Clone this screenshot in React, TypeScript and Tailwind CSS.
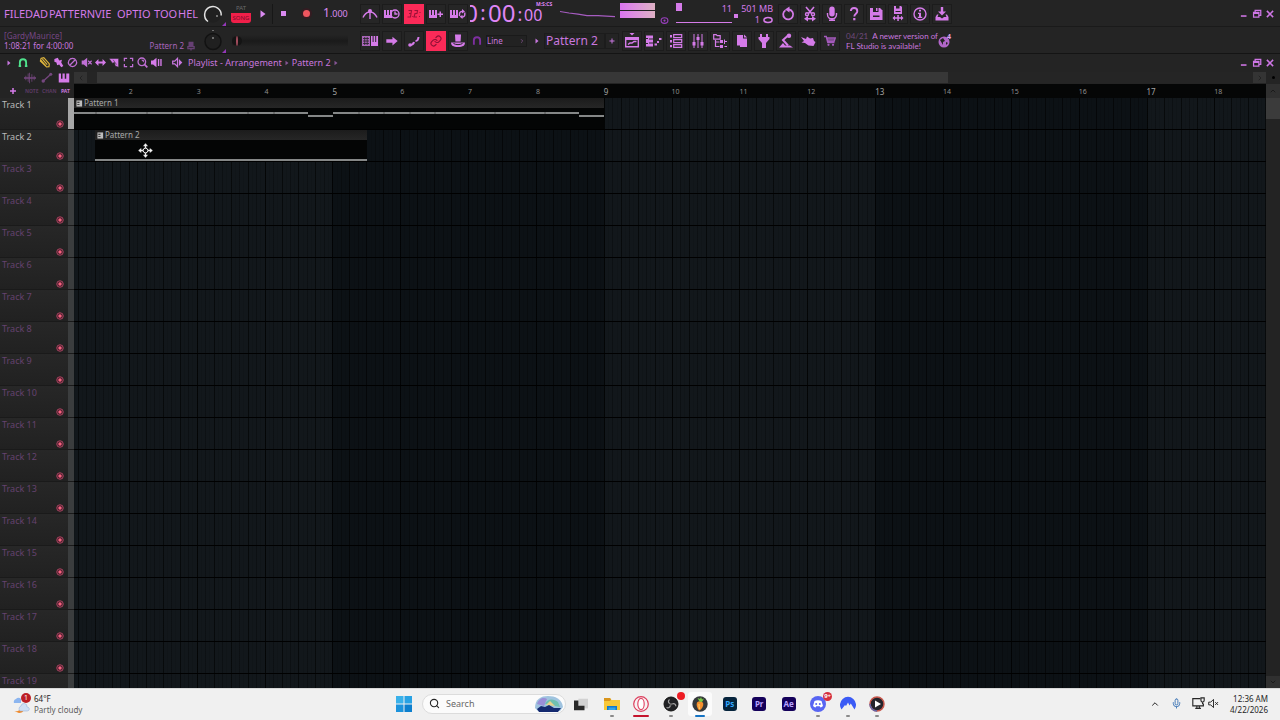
import React from "react";
import { Mic, Link as LinkIcon, Search, ChevronUp, ChevronDown, ChevronRight, ChevronLeft } from "lucide-react";

const BAR = 67.85;
const ORIGIN = -13;
const TRACKS = 19;
const BAR_NUMBERS = Array.from({ length: 18 }, (_, i) => i + 1);

function Glyph({ children, className = "size-4" }: { children: React.ReactNode; className?: string }) {
  return (
    <svg viewBox="0 0 16 16" className={`shrink-0 ${className}`} fill="currentColor" stroke="none" aria-hidden="true">
      {children}
    </svg>
  );
}

const line = { fill: "none", stroke: "currentColor", strokeWidth: 1.4 } as const;

const icons: Record<string, React.ReactNode> = {
  metronome: <Glyph><path d="M1 11.500C2.500 8 4.500 6.500 7 6M15 11.500C13.500 8 11.500 6.500 9 6M8 6v7" {...line} /><circle cx="8" cy="5" r="2" /></Glyph>,
  waitInput: <Glyph><path d="M0 4h2v5h1V4h2v5h1V4h2v8H0z" /><circle cx="11" cy="8" r="4" {...line} /><path d="M11 5.500V8h2.500" {...line} /></Glyph>,
  countdown: <Glyph className="size-4 text-[#9a1238]"><path d="M2.500 4.500h3l-.5 3H3m2 0-.5 3.500h-3M8.500 4.500h3l-.5 3H9L8 11h3" {...line} strokeWidth="1.1" /><path d="M6.300 10h1v1h-1zM13.500 6h1v1h-1zM13 10h1v1h-1z" /></Glyph>,
  overdub: <Glyph><path d="M1 4h2v5h1V4h2v5h1V4h2v8H1zM11.500 5.500h1.500v2h2V9h-2v2h-1.500V9h-2V7.500h2z" /></Glyph>,
  loopRec: <Glyph><path d="M0 4h2v5h1V4h2v5h1V4h2v8H0z" /><path d="M9.500 10V8a2.500 2.500 0 0 1 3-2.500M14.800 6.500V8.500a2.500 2.500 0 0 1-3 2.500" {...line} /><path d="m12 3 3 2.500-3 2zM12.500 13l-3-2.500 3-1.500z" /></Glyph>,
  typing: <Glyph><path d="M0 3h8v10H0z" opacity=".75" /><path d="M1 5.500h6M1 8h6M1 10.500h6M2.700 4v8M5.200 4v8" stroke="#242424" strokeWidth=".8" /><path d="M9 3h1.600v6h1V3h1.600v6h1V3H16v10H9z" /></Glyph>,
  arrow: <Glyph className="size-3.5"><path d="M1.500 6h7V3l6 5-6 5v-3h-7z" /></Glyph>,
  slide: <Glyph><path d="M4 12c3 0 3.500-1 4-3" {...line} strokeWidth="2" /><path d="M9.500 8c2 0 2.800-1.500 3-4" {...line} strokeWidth="2" /><circle cx="4" cy="12" r="1.800" /></Glyph>,
  stamp: <Glyph><path d="M5 1.500h6l-.4 7h-5.200z" /><path d="M1 9.500h14c0 3-2 4.500-7 4.500s-7-1.500-7-4.500z" /><path d="M3.500 10.500c2.500 1.500 6.500 1.500 9 0" stroke="#242424" fill="none" /></Glyph>,
  playlist: <Glyph><path d="M5.500 0h5L8 2.500z" /><path d="M1.700 4.700h12.600v9H1.700zM2 6.200h12" {...line} /><path d="M4 11.500l2-1.500h2l2-1.500h2.500" {...line} /></Glyph>,
  pianoRoll: <Glyph><path d="M0 2.500h7v3H3v1h4v3H3v1h4v3H0V11h2v-1H0V6h2V5H0z" /><path d="M8.500 10.500h2.500v2H8.500zM11 8h2v2h-2zM13 5h2.500v2H13z" /></Glyph>,
  rack: <Glyph><path d="M5.700 1.700h8v3h-8zM5.700 6.700h8v3h-8zM5.700 11.700h8v2.600h-8z" {...line} strokeWidth="1.200" /><path d="M2 2h2v2.500H2zM2 7h2v2.500H2zM2 12h2v2.300H2z" /></Glyph>,
  mixer: <Glyph><path d="M4 1v14M8 1v14M12 1v14" stroke="currentColor" strokeWidth="1" /><path d="M2.500 9h3v3.500h-3zM6.500 4h3v3h-3zM10.500 9h3v3.500h-3z" /></Glyph>,
  browser: <Glyph><path d="M1.700 1.700h2.500l1 1h3v3.500H1.700zM3.500 7v6.500h4M3.500 9h4" {...line} strokeWidth="1.200" /><path d="M8 7h3v3H8zM8 12h3v3H8zM12.500 8H15v1h-2.500zM12.500 13H15v1h-2.500zM12 6.500h1V11h-1z" /></Glyph>,
  project: <Glyph><path d="M3 2h6v3.500h4V14H6v-1.500H3z" /><path d="m10 1.500 3.200 3H10z" /></Glyph>,
  plug: <Glyph><path d="M4 1h2v3h4V1h2v3h1.500v2L10 10v5H6v-5L2.500 6V4H4z" /></Glyph>,
  touch: <Glyph><path d="M9.500 3 5 7l5 5.500" {...line} strokeWidth="2" /><circle cx="11" cy="2.800" r="2.200" /><path d="M1 14.500 5 10l2 2.500h5l3 2z" /></Glyph>,
  hand: <Glyph><path d="M1 4l5 2 1-2.500 3 2 3-.5 1 3 1.500 1-2 4-5-.5L5 10 1.500 9.500 4 8z" /></Glyph>,
  cart: <Glyph className="size-3 text-[#a45abb]"><path d="M0 2h3l2 8h9M4 4h11l-1.500 4.500H5z" {...line} strokeWidth="1.800" /><path d="M4.500 4.500h10L13 9H5.500z" opacity=".7" /><circle cx="6" cy="13" r="1.500" /><circle cx="12" cy="13" r="1.500" /></Glyph>,
  undo: <Glyph><path d="M5.500 4.200A5 5 0 1 0 9 3.500" {...line} strokeWidth="1.800" /><path d="m9.500.5-4.500 3 4.500 3z" /></Glyph>,
  cut: <Glyph><path d="m4 1 5.500 6.500M12 1 6.500 7.500" {...line} strokeWidth="1.600" /><circle cx="5" cy="8.200" r="1.500" {...line} /><circle cx="11" cy="8.200" r="1.500" {...line} /><path d="m6 10-4 2.700L6 15.500v-2h4v2l4-2.800L10 10v2H6z" /></Glyph>,
  microphone: <Glyph><rect x="5.300" y="0.500" width="5.400" height="10" rx="2.700" /><path d="M3.500 7v1.500a4.500 4.500 0 0 0 9 0V7" {...line} /><path d="M7.200 12h1.600v1.500H11V15H5v-1.500h2.200z" /></Glyph>,
  help: <Glyph><path d="M4.800 5C5 3 6 2 8 2s3.300 1.200 3.300 3.200C11.300 7.800 8.300 7.600 8.300 10.500" {...line} strokeWidth="1.900" /><path d="M7.200 12h2.200v2.300H7.200z" /></Glyph>,
  save: <Glyph><path d="M2 2h10l2.500 2.500V14H2z" /><path d="M5 2h5.500v4H5z" fill="#242424" /><path d="M5 9.500h6.500V11H5z" fill="#242424" /><path d="M8 2h1.500v3H8z" /></Glyph>,
  saveNew: <Glyph><path d="M4 0h7l1 1v7H4z" /><path d="M6 0h3.500v2.500H6zM5.500 5h5v1h-5z" fill="#242424" /><path d="M7.300 9h1.500v2.200H11v-1.700l2.500 2.500L11 14.500v-1.700H8.800V15H7.300v-2.200H5v1.700L2.500 12 5 9.500v1.700h2.300z" /></Glyph>,
  about: <Glyph><circle cx="8" cy="8" r="6" {...line} /><path d="M7 3.800h2v1.800H7zM6 6.800h3v4h1.200V12H5.800v-1.200H7V8H6z" /></Glyph>,
  render: <Glyph><path d="M6.800 1h2.400v4.500H12L8 9.500l-4-4h2.800z" /><path d="M3 8.500 1.500 11v3.500h13V11L13 8.500h-1.500L12.500 11H10l-2 1.500L6 11H3.500l1-2.500z" /></Glyph>,
};

function ToolButton({ label, active = false, children }: { label: string; active?: boolean; children: React.ReactNode }) {
  return (
    <button
      type="button"
      aria-label={label}
      className={
        active
          ? "flex size-5 items-center justify-center bg-[#fb2a58] text-[#8c1035]"
          : "flex size-5 items-center justify-center border border-[#1c1c1c] bg-[#262626] text-[#d57be9]"
      }
    >
      {children}
    </button>
  );
}

function Knob({ bright = false, label }: { bright?: boolean; label: string }) {
  return (
    <div role="img" aria-label={label} className="flex w-7 shrink-0 items-center justify-center">
      <svg viewBox="0 0 28 26" className="h-[26px] w-7" fill="none">
        <circle cx="13" cy="13.500" r="8" fill="#202020" stroke={bright ? "none" : "#121212"} strokeWidth="1.500" />
        {bright && <path d="M8 20.500a8.300 8.300 0 1 1 13.200-6" stroke="#e2e2e2" strokeWidth="1.500" />}
        {bright ? <circle cx="17" cy="15" r=".8" fill="#ddd" /> : <path d="M12.500 2h1v1h-1zM12.500 9h1v2h-1z" fill="#bbb" />}
        <path d="M22 25h4v-4z" fill="#9438b8" />
      </svg>
    </div>
  );
}

function WindowControls({ app }: { app: string }) {
  return (
    <div className="ml-auto flex items-center gap-[3px] pr-[5px] text-[#cf76e6]">
      <button type="button" aria-label={`Minimize ${app}`} className="flex h-3 w-2.5 items-center justify-center">
        <Glyph className="size-2.5"><path d="M3 10h9v2.500H3z" /></Glyph>
      </button>
      <button type="button" aria-label={`Restore ${app}`} className="flex h-3 w-2.5 items-center justify-center">
        <Glyph className="size-2.5"><path d="M5 5V2h9v8h-3M2.500 5.500h8.500v7.500H2.500zM2 7h9" {...line} strokeWidth="2" /></Glyph>
      </button>
      <button type="button" aria-label={`Close ${app}`} className="flex h-3 w-2.5 items-center justify-center">
        <Glyph className="size-2.5"><path d="m3 3 10 10M13 3 3 13" {...line} strokeWidth="2.500" /></Glyph>
      </button>
    </div>
  );
}

const menu = [
  ["FIL", "w-[15px]"],
  ["ED", "w-[14px]"],
  ["AD", "w-4"],
  ["PATTERN", "w-[46px]"],
  ["VIE", "w-[22px]"],
  ["OPTIO", "w-[37px]"],
  ["TOO", "w-6"],
  ["HEL", "w-5"],
];

function MainBar() {
  return (
    <div className="flex h-[27px] items-center overflow-hidden border-b border-[#1a1a1a] pt-px">
      <nav aria-label="Main menu" className="flex w-[200px] shrink-0 pl-1">
        {menu.map(([text, width]) => (
          <button key={text} type="button" className={`${width} shrink-0 text-left text-[11px] leading-4 whitespace-nowrap text-[#d57be9]`}>
            {text}
          </button>
        ))}
      </nav>
      <Knob bright label="Main volume" />
      <div className="flex w-[26px] shrink-0 flex-col items-center">
        <span className="text-[6px] leading-[9px] text-[#6b6b6b]">PAT</span>
        <button type="button" className="h-[10px] w-5 rounded-b-[3px] bg-[#f01f49] text-[6px] leading-[10px] text-[#7d0b2a]">SONG</button>
      </div>
      <button type="button" aria-label="Play" className="flex h-5 w-[19px] items-center justify-center border-r border-[#171717] text-[#d98af0]">
        <Glyph className="size-2.5"><path d="M4 2l8 6-8 6z" /></Glyph>
      </button>
      <button type="button" aria-label="Stop" className="flex h-5 w-5 items-center justify-center text-[#d98af0]">
        <span className="size-[5px] bg-current" />
      </button>
      <button type="button" aria-label="Record" className="flex h-5 w-[26px] items-center justify-center">
        <span className="size-[7px] rounded-full bg-[#f0565f] ring-2 ring-[#351c22]" />
      </button>
      <div className="flex w-[41px] shrink-0 items-baseline pl-1 text-[#d98af0]">
        <span className="text-[12px] leading-4">1</span>
        <span className="text-[9px] leading-4">.000</span>
      </div>
      <div className="flex shrink-0 gap-0.5">
        <ToolButton label="Metronome">{icons.metronome}</ToolButton>
        <ToolButton label="Wait for input">{icons.waitInput}</ToolButton>
        <ToolButton label="Countdown before recording" active>{icons.countdown}</ToolButton>
        <ToolButton label="Overdub">{icons.overdub}</ToolButton>
        <ToolButton label="Loop recording">{icons.loopRec}</ToolButton>
      </div>
      <div className="flex w-[87px] shrink-0 pl-0.5 text-[#df86f5]">
        <span className="flex w-2 justify-end overflow-hidden text-[24px] leading-[26px]">0</span>
        <span className="w-[10px] text-center text-[20px] leading-[26px]">:</span>
        <span className="w-7 text-[24px] leading-[26px]">00</span>
        <span className="w-2 text-center text-[18px] leading-[28px]">:</span>
        <span className="flex flex-col text-[16px]">
          <span className="pl-3 text-[5px] leading-[8px] font-bold">M:S:CS</span>
          <span className="leading-[14px]">00</span>
        </span>
      </div>
      <svg viewBox="0 0 64 26" className="h-[26px] w-16 shrink-0" fill="none" stroke="#a65cc0" strokeWidth="1.200" aria-hidden="true">
        <path d="M5 10.500 14 12l9 1.200 9 1.500h11l17 1" />
      </svg>
      <div className="flex h-full w-[37px] shrink-0 flex-col items-center gap-px pt-0.5">
        <span className="h-[7px] w-[35px] bg-linear-to-r from-[#db74f0] to-[#dfb1c4]" />
        <span className="h-[7px] w-[35px] bg-linear-to-r from-[#db74f0] to-[#dfb1c4]" />
      </div>
      <div className="flex h-full w-[122px] shrink-0 text-[9px] leading-[11px] text-[#d57be9]">
        <Glyph className="mt-[15px] ml-1 size-[9px] text-[#9a3fc0]"><ellipse cx="8" cy="8" rx="6" ry="5" {...line} strokeWidth="2" /><circle cx="8" cy="8" r="2" /></Glyph>
        <div className="ml-[7px] flex h-[22px] w-14 justify-between border-b border-current pt-0.5">
          <span className="h-2 w-1.5 bg-current" />
          <span>11</span>
        </div>
        <span className="mt-[13px] ml-0.5 size-1 bg-current" />
        <div className="ml-auto flex flex-col items-end pt-0.5 pr-[5px] whitespace-nowrap">
          <span>501 MB</span>
          <span className="flex items-center gap-[3px]">
            1<Glyph className="size-[10px]"><ellipse cx="8" cy="8" rx="6.500" ry="4" {...line} strokeWidth="2.500" /></Glyph>
          </span>
        </div>
      </div>
      <div className="flex shrink-0 gap-0.5">
        <ToolButton label="Undo">{icons.undo}</ToolButton>
        <ToolButton label="Cut">{icons.cut}</ToolButton>
        <ToolButton label="Audio recording">{icons.microphone}</ToolButton>
        <ToolButton label="Help">{icons.help}</ToolButton>
        <ToolButton label="Save">{icons.save}</ToolButton>
        <ToolButton label="Save new version">{icons.saveNew}</ToolButton>
        <ToolButton label="About">{icons.about}</ToolButton>
        <ToolButton label="Export">{icons.render}</ToolButton>
      </div>
      <WindowControls app="FL Studio" />
    </div>
  );
}

function PatternBar() {
  return (
    <div className="flex h-[27px] items-center overflow-hidden border-b border-[#141414] pt-px text-[#c877df]">
      <div className="flex w-[200px] shrink-0 items-end justify-between pr-1 pl-1 text-[8px] leading-[10px]">
        <div>
          <p className="text-[#754683]">[GardyMaurice]</p>
          <p>1:08:21 for 4:00:00</p>
        </div>
        <p className="flex items-center gap-0.5 text-[#a864bb]">
          Pattern 2
          <Glyph className="size-2.5 text-[#674074]"><path d="M4 1h8v9H4zM2 8h2v3h8V8h2v5H9v2H7v-2H2z" /></Glyph>
        </p>
      </div>
      <Knob label="Main pitch" />
      <div className="flex w-[132px] shrink-0 items-center pl-1">
        <input
          type="range"
          aria-label="Song position"
          defaultValue={0}
          className="h-3 w-[116px] appearance-none bg-linear-to-b from-transparent via-[#1a1a1a] to-transparent [&::-webkit-slider-thumb]:h-2.5 [&::-webkit-slider-thumb]:w-2.5 [&::-webkit-slider-thumb]:appearance-none [&::-webkit-slider-thumb]:rounded-full [&::-webkit-slider-thumb]:border-x-4 [&::-webkit-slider-thumb]:border-[#141414] [&::-webkit-slider-thumb]:bg-[#a04c5c]"
        />
      </div>
      <div className="flex shrink-0 gap-0.5">
        <ToolButton label="Typing keyboard to piano">{icons.typing}</ToolButton>
        <ToolButton label="Step editing">{icons.arrow}</ToolButton>
        <ToolButton label="Scroll to play position">{icons.slide}</ToolButton>
        <ToolButton label="Link controllers" active><LinkIcon size={12} strokeWidth={2.2} /></ToolButton>
        <ToolButton label="Multilink">{icons.stamp}</ToolButton>
      </div>
      <div className="flex w-[62px] shrink-0 items-center gap-1 pl-1">
        <Glyph className="size-2.5 text-[#7e2fa0]"><path d="M3 14V7a5 5 0 0 1 10 0v7M3 12h1M12 12h1" {...line} strokeWidth="3" /></Glyph>
        <div className="flex h-3 w-[41px] items-center border border-[#1a1a1a] bg-[#222]">
          <select aria-label="Snap" className="h-2.5 w-8 appearance-none bg-transparent text-[8px] leading-[10px]">
            <option>Line</option>
          </select>
          <ChevronRight size={6} strokeWidth={3} className="opacity-60" />
        </div>
      </div>
      <div className="flex w-[92px] shrink-0 items-center">
        <span className="flex w-3.5 justify-center"><Glyph className="size-2"><path d="M5 3l6 5-6 5z" /></Glyph></span>
        <button type="button" className="flex h-4 w-[61px] items-center border border-[#1c1c1c] bg-[#222] pl-px text-[12px] leading-4 whitespace-nowrap">Pattern 2</button>
        <button type="button" aria-label="Add pattern" className="flex h-4 w-3.5 items-center justify-center border border-[#1c1c1c]">
          <Glyph className="size-2"><path d="M7 3h2v4h4v2H9v4H7V9H3V7h4z" /></Glyph>
        </button>
      </div>
      <div className="flex shrink-0 gap-0.5">
        <ToolButton label="Playlist">{icons.playlist}</ToolButton>
        <ToolButton label="Piano roll">{icons.pianoRoll}</ToolButton>
        <ToolButton label="Channel rack">{icons.rack}</ToolButton>
        <ToolButton label="Mixer">{icons.mixer}</ToolButton>
        <ToolButton label="Browser">{icons.browser}</ToolButton>
        <ToolButton label="Project picker">{icons.project}</ToolButton>
        <ToolButton label="Plugin picker">{icons.plug}</ToolButton>
        <ToolButton label="Tempo tapper">{icons.touch}</ToolButton>
        <ToolButton label="Touch controller">{icons.hand}</ToolButton>
        <ToolButton label="Shop">{icons.cart}</ToolButton>
      </div>
      <p className="w-[97px] shrink-0 pl-1.5 font-[Lato,'Noto_Sans',sans-serif] text-[8px] leading-[10px] whitespace-nowrap">
        <span className="mr-1 text-[#6f4a7a]">04/21</span>A newer version of<br />FL Studio is available!
      </p>
      <button type="button" aria-label="4 news items" className="relative size-4 text-[#b266c9]">
        <Glyph><circle cx="7" cy="9" r="5.500" /><path d="M3 7l3-2 2 3-2 1v3zM9 9l2 1-2 2z" fill="#242424" /></Glyph>
        <span className="absolute top-0 right-0.5 text-[7px] leading-2 font-bold text-[#e2a2f2]">4</span>
      </button>
    </div>
  );
}

const tools: [string, string, React.ReactNode][] = [
  ["Draw", "text-[#dfb53c]", <path key="d" d="m3 2 4-1 8 9-.5 4-3.500.5L2 6zM5 3l7 8M3 5l7 8" {...line} strokeWidth="1.700" />],
  ["Paint", "text-[#d57be9]", <path key="p" d="m2 3 5-2 2 4 4-1-1 4 3 5-3 2-3-4-3 1-1-4-3-1z" />],
  ["Delete", "text-[#c06fd5]", <path key="x" d="M8 2a6 6 0 1 0 .01 0M12 4l-8 8" {...line} strokeWidth="1.800" />],
  ["Mute", "text-[#c06fd5]", <g key="m"><path d="M1 5h3l5-4v14l-5-4H1z" /><path d="m10.500 5.500 5 5m0-5-5 5" {...line} strokeWidth="1.800" /></g>],
  ["Slip", "text-[#d57be9]", <path key="s" d="M0 8l5-5v3.500h6V3l5 5-5 5V9.500H5V13z" />],
  ["Slice", "text-[#d57be9]", <path key="c" d="M0 2h14v13l-5-2-1-5-3 1zM6 4l5 7" stroke="#242424" strokeWidth=".8" />],
  ["Select", "text-[#c06fd5]", <path key="e" d="M2 6V2h4M10 2h4v4M14 10v4h-4M6 14H2v-4" {...line} strokeWidth="1.800" />],
  ["Zoom", "text-[#c06fd5]", <g key="z"><circle cx="7" cy="7" r="5.500" {...line} strokeWidth="2" /><path d="m10.500 10.500 4.500 4.500" {...line} strokeWidth="2.500" /><path d="M6 4h4v4z" /></g>],
  ["Playback", "text-[#d57be9]", <path key="b" d="M0 5h3l5-4v14l-5-4H0zM10 3h2v10h-2zM13.500 3h2v10h-2z" />],
];

function PlaylistTitle() {
  return (
    <div className="flex h-[17px] items-center text-[#c877df]">
      <span className="flex w-[18px] justify-center"><Glyph className="size-2"><path d="M5 3l6 5-6 5z" /></Glyph></span>
      <button type="button" aria-label="Snap to grid" className="mr-[9px] flex w-2.5 justify-center text-[#4fe28c]">
        <Glyph className="size-2.5"><path d="M3 14.500V7a5 5 0 0 1 10 0v7.500M1 13h4M11 13h4" {...line} strokeWidth="3" /></Glyph>
      </button>
      {tools.map(([label, color, shape]) => (
        <button key={label} type="button" aria-label={label} className={`flex w-3.5 justify-center ${color}`}>
          <Glyph className="size-[11px]">{shape}</Glyph>
        </button>
      ))}
      <span className="ml-1 flex w-[21px] justify-center">
        <Glyph className="size-[11px]"><path d="M1 6h3l4-4v12l-4-4H1z" {...line} strokeWidth="1.800" /><path d="M10 3l5 5-5 5z" /></Glyph>
      </span>
      <h1 className="text-[9px] leading-3 whitespace-nowrap">Playlist - Arrangement</h1>
      <Glyph className="mx-0.5 size-[6px] opacity-60"><path d="M4 2l8 6-8 6z" /></Glyph>
      <span className="text-[9px] leading-3 whitespace-nowrap">Pattern 2</span>
      <Glyph className="ml-0.5 size-[6px] opacity-60"><path d="M4 2l8 6-8 6z" /></Glyph>
      <WindowControls app="playlist" />
    </div>
  );
}

function ScrollRow() {
  return (
    <div className="flex h-[13px] items-center">
      <div className="flex w-[74px] shrink-0 items-center gap-[5px] pl-6 text-[#75477f]">
        <Glyph className="size-3"><path d="M0 7h2V5h1v2h2V2h1v5h1V1h1v6h2V3h1v4h2V5h1v2h2v2h-2v2h-1V9h-2v4h-1V9H8v6H7V9H6v4H5V9H3v2H2V9H0z" /></Glyph>
        <Glyph className="size-3"><path d="M2 13 13 3" {...line} strokeWidth="1.800" /><circle cx="3" cy="12" r="2.300" /><circle cx="13" cy="3" r="2" /></Glyph>
        <Glyph className="size-3 text-[#d57be9]"><path d="M1 2h3v7h2V2h3v7h2V2h4v12H1z" /></Glyph>
      </div>
      <button type="button" aria-label="Scroll left" className="flex h-[11px] w-[13px] items-center justify-center bg-[#333] text-[#191919]"><ChevronLeft size={8} /></button>
      <div className="flex h-[11px] flex-1 bg-[#252525] pl-2.5">
        <div className="h-full w-[73.6%] bg-[#373737]" />
      </div>
      <button type="button" aria-label="Scroll right" className="flex h-[11px] w-[13px] items-center justify-center bg-[#343434] text-[#191919]"><ChevronRight size={8} /></button>
      <span className="flex w-3.5 justify-center"><span className="size-[3px] rounded-full bg-black" /></span>
    </div>
  );
}

function Ruler() {
  return (
    <div className="flex h-3.5">
      <div className="flex w-[74px] shrink-0 items-center text-[5px] leading-3 font-bold text-[#5a3a62]">
        <button type="button" aria-label="Add track" className="flex w-[25px] justify-center text-[#d57be9]">
          <Glyph className="size-2"><path d="M6.500 2h3v4.500H14v3H9.500V14h-3V9.500H2v-3h4.500z" /></Glyph>
        </button>
        <span className="w-[17px]">NOTE</span>
        <span className="w-[19px]">CHAN</span>
        <span className="text-[#c877df]">PAT</span>
      </div>
      <div className="min-w-0 flex-1 overflow-hidden bg-[#050606]">
        <div className="-ml-[13px] grid" style={{ gridTemplateColumns: `repeat(${BAR_NUMBERS.length}, ${BAR}px)` }}>
          {BAR_NUMBERS.map((n) => (
            <span key={n} className={n % 4 === 1 ? "text-[8px] leading-[15px] text-[#a3a3a3]" : "text-[7px] leading-[15px] text-[#8d8d8d]"}>
              {n > 1 ? n : ""}
            </span>
          ))}
        </div>
      </div>
      <button type="button" aria-label="Scroll up" className="flex w-3.5 items-center justify-center bg-[#303030] text-[#111]"><ChevronUp size={8} /></button>
    </div>
  );
}

function TrackHeader({ n }: { n: number }) {
  return (
    <div className="flex h-8 shrink-0 border-b border-[#1a1a1a]">
      <div className="flex w-[68px] justify-between bg-linear-to-b from-[#272727] to-[#212121] pr-1 pl-0.5">
        <span className={`text-[9px] leading-[14px] ${n <= 2 ? "text-[#b9b9b9]" : "text-[#65426f]"}`}>Track {n}</span>
        <button type="button" aria-label={`Mute track ${n}`} className="mt-[22px] size-2">
          <Glyph className="size-2"><circle cx="8" cy="8" r="6.500" fill="#401a26" stroke="#b34a68" strokeWidth="1.800" /><circle cx="8" cy="8" r="3.500" fill="#f5607f" /></Glyph>
        </button>
      </div>
      <div className={n === 1 ? "w-1.5 bg-[#a6a6a6]" : "w-1.5 bg-[#3b3d3e]"} />
    </div>
  );
}

function Clip({ name, className, notes }: { name: string; className: string; notes: React.ReactNode }) {
  return (
    <div className={`flex h-[31px] flex-col bg-[#040505] ${className}`}>
      <div className="flex h-2.5 items-center gap-px bg-linear-to-b from-[#1c1c1c] to-[#262626] pl-0.5 text-[8px] leading-[10px] text-[#a9a9a9]">
        <Glyph className="size-[7px] text-[#bdbdbd]"><path d="M1 1h13v14H1z" /><path d="M3 4h5v2H3zM3 9h5v2H3z" fill="#1c1c1c" /></Glyph>
        {name}
      </div>
      {notes}
    </div>
  );
}

function Arrangement() {
  const beat = BAR / 4;
  const vertical = (step: number, color: string) =>
    `repeating-linear-gradient(90deg, ${color} 0, ${color} 1px, transparent 1px, transparent ${step}px)`;
  const lines = {
    backgroundImage: [
      vertical(BAR, "rgba(0,0,0,.5)"),
      vertical(beat, "rgba(0,0,0,.4)"),
      vertical(beat / 2, "rgba(0,0,0,.22)"),
      vertical(beat / 4, "rgba(0,0,0,.1)"),
      `repeating-linear-gradient(90deg, #12171b 0, #12171b ${BAR * 4}px, #0c1115 ${BAR * 4}px, #0c1115 ${BAR * 8}px)`,
    ].join(","),
    backgroundPosition: `${ORIGIN}px 0`,
    backgroundSize: `${BAR * 24}px 100%`,
  };
  return (
    <main className="flex min-h-0 flex-1 overflow-hidden">
      <div className="w-[74px] shrink-0">
        {Array.from({ length: TRACKS }, (_, i) => (
          <TrackHeader key={i} n={i + 1} />
        ))}
      </div>
      <div className="min-w-0 flex-1" style={lines}>
        {Array.from({ length: TRACKS }, (_, i) => (
          <div key={i} className="relative h-8 border-b border-black">
            {i === 0 && (
              <Clip
                name="Pattern 1"
                className="w-[530px]"
                notes={
                  <svg viewBox="0 0 530 21" className="h-[21px] w-[530px]" fill="none" stroke="#858787" strokeWidth="2" aria-hidden="true">
                    <path d="M0 5h234M234 8h25M259 5h246M505 8h25" />
                    <path d="M22 4v2M73 4v2M98 4v2M174 4v2M200 4v2M285 4v2M310 4v2M336 4v2M361 4v2M421 4v2M471 4v2" stroke="#555" strokeWidth="1" />
                  </svg>
                }
              />
            )}
            {i === 1 && (
              <Clip name="Pattern 2" className="ml-[21px] w-[272px]" notes={<div className="mt-auto h-0.5 bg-[#858787]" />} />
            )}
            {i === 1 && (
              <svg viewBox="0 0 16 16" className="absolute top-[13px] left-16 size-[15px]" fill="#f4f4f4" stroke="#000" strokeWidth=".4" aria-hidden="true">
                <path d="M8 0l3 3.500H9V6H7V3.500H5zM8 16l3-3.500H9V10H7v2.500H5zM0 8l3.500-3v2H6v2H3.500v2zM16 8l-3.500-3v2H10v2h2.500v2z" />
                <circle cx="8" cy="8" r="2.500" fill="#111" stroke="#f4f4f4" strokeWidth="1" />
              </svg>
            )}
          </div>
        ))}
      </div>
      <div className="flex w-3.5 shrink-0 flex-col bg-[#232323]">
        <div className="h-[21px] bg-[#3b3b3b]" />
        <button type="button" aria-label="Scroll down" className="mt-auto flex h-3 items-center justify-center bg-[#303030] text-[#111]"><ChevronDown size={8} /></button>
      </div>
    </main>
  );
}

function AdobeIcon({ text, className }: { text: string; className: string }) {
  return <span className={`flex size-3.5 items-center justify-center rounded-[3px] text-[8px] leading-[14px] font-bold ${className}`}>{text}</span>;
}

const apps: { label: string; mark?: string; selected?: boolean; icon: React.ReactNode }[] = [
  {
    label: "File Explorer",
    mark: "w-1 bg-[#8a8a8a]",
    icon: <Glyph><path d="M0 2h6l1.500 2H16v10H0z" fill="#f9c838" /><path d="M0 2h6l1 1.500-1 1.500H0z" fill="#d9951c" /><path d="M3 10h10v4H3z" fill="#1479c9" /><path d="M4.500 11.500h7V14h-7z" fill="#37a4e6" /></Glyph>,
  },
  {
    label: "Opera",
    mark: "w-4 bg-[#c4142c]",
    icon: <Glyph><circle cx="8" cy="8" r="7.300" fill="#f7f2f3" stroke="#dc3e5c" strokeWidth="1.200" /><ellipse cx="8" cy="8" rx="3.200" ry="5.700" fill="#fff" stroke="#e14a68" strokeWidth="1.200" /></Glyph>,
  },
  {
    label: "OBS Studio",
    mark: "w-1 bg-[#8a8a8a]",
    icon: (
      <span className="relative">
        <Glyph><circle cx="8" cy="8" r="7" fill="#202124" stroke="#111" /><path d="M7 7.500C5 7 5 4.500 6.500 3.500M9.200 8c2-1 3.800.5 3.600 2.300M7.300 9.200c0 2.300-2 3.200-3.800 2.300" fill="none" stroke="#a5a5a5" strokeWidth="1.200" /><circle cx="8" cy="8.200" r="1.200" fill="#666" /></Glyph>
        <span className="absolute -top-1 -right-1.5 size-2 rounded-full bg-[#ee1c24]" />
      </span>
    ),
  },
  {
    label: "FL Studio",
    mark: "w-2.5 bg-[#1674c4]",
    selected: true,
    icon: <Glyph><circle cx="8" cy="8" r="7.700" fill="#35383b" /><path d="M5 6.500C7 4.500 10 5 11 7s-1 6.500-4 7.500C5 12 4 8.500 5 6.500z" fill="#f6902e" /><path d="M7 8c0 2 0 3 .5 5" stroke="#ffd06b" fill="none" /><path d="M7.500 5.500 5.500 2l2.500 1 1-2 1 2.500 2-1-2 3.500z" fill="#7ccb49" /></Glyph>,
  },
  { label: "Photoshop", icon: <AdobeIcon text="Ps" className="bg-[#06243c] text-[#31a8ff]" /> },
  { label: "Premiere Pro", icon: <AdobeIcon text="Pr" className="bg-[#14005a] text-[#b7a4ff]" /> },
  { label: "After Effects", icon: <AdobeIcon text="Ae" className="bg-[#14005a] text-[#b7a4ff]" /> },
  {
    label: "Discord",
    mark: "w-1 bg-[#8a8a8a]",
    icon: (
      <span className="relative">
        <Glyph><circle cx="8" cy="8" r="8" fill="#5865f2" /><path d="M4.500 5c2-1 5-1 7 0l1.500 5c-1 1-1.500 1.200-2.500 1.400l-.8-1.100H6.300l-.8 1.100C4.500 11.200 4 11 3 10z" fill="#fff" /><circle cx="6.200" cy="8" r="1" fill="#5865f2" /><circle cx="9.800" cy="8" r="1" fill="#5865f2" /></Glyph>
        <span className="absolute -top-1 -right-1.5 size-[9px] rounded-full bg-[#d5303e] text-center text-[6px] leading-[9px] font-bold text-white">9+</span>
      </span>
    ),
  },
  {
    label: "NordVPN",
    mark: "w-1 bg-[#8a8a8a]",
    icon: <Glyph><path d="M1.500 13.500a8 8 0 1 1 13 0L10.800 7.500 9.500 9.500 8 6.500l-2 3.500-1-1z" fill="#3b5bf5" /></Glyph>,
  },
  {
    label: "Media Player",
    mark: "w-1 bg-[#8a8a8a]",
    icon: <Glyph><circle cx="8" cy="8" r="7" fill="#23242c" stroke="#c8574c" strokeWidth="1.500" /><path d="M1 8a7 7 0 0 0 7 7" fill="none" stroke="#6265a8" strokeWidth="1.500" /><path d="m6 4.500 6 3.500-6 3.500z" fill="#fff" /></Glyph>,
  },
];

function Taskbar() {
  return (
    <footer className="flex h-8 shrink-0 items-center border-t border-[#d8d8d8] bg-[#f0f0f0] pb-0.5 text-[8px] leading-[11px] text-[#262626]">
      <button type="button" className="flex flex-1 items-center gap-[3px] pl-[13px] text-left">
        <span className="relative">
          <svg viewBox="0 0 18 18" className="size-[18px]" aria-hidden="true">
            <path d="M1 16c4 1 8-1 8-6 4 3 2 8-3 8z" fill="#ef8a2c" />
            <path d="M1 8a3 3 0 0 1 2-4 3 3 0 0 1 5 0v4z" fill="#8cb5ef" />
            <path d="M7 16a3 3 0 0 1 1-5 3 3 0 0 1 6 1c3 0 3 4 0 4z" fill="#cfdff5" stroke="#8ba9d6" strokeWidth=".5" />
          </svg>
          <span className="absolute -top-0.5 right-0 size-2.5 rounded-full bg-[#bd1f26] text-center text-[7px] leading-[10px] text-white">1</span>
        </span>
        <span>
          <span className="block">64°F</span>
          <span className="block text-[#5c5c5c]">Partly cloudy</span>
        </span>
      </button>
      <div className="ml-1 flex h-full items-center">
        <button type="button" aria-label="Start" className="mr-2.5">
          <Glyph><path d="M0 0h7.500v7.500H0z" fill="#39b1ea" /><path d="M8.500 0H16v7.500H8.500z" fill="#28a2e4" /><path d="M0 8.500h7.500V16H0z" fill="#1c93dc" /><path d="M8.500 8.500H16V16H8.500z" fill="#0c7fce" /></Glyph>
        </button>
        <label className="flex h-5 w-[144px] items-center rounded-full border border-[#dcdcdc] bg-[#fbfbfb] pr-0.5 pl-1.5">
          <Search size={11} strokeWidth={2.4} className="shrink-0" />
          <input type="text" aria-label="Search" placeholder="Search" className="h-4 w-full min-w-0 bg-transparent pl-1.5 text-[9px] placeholder:text-[#686868] outline-none" />
          <svg viewBox="0 0 28 16" className="h-4 w-7 shrink-0" aria-hidden="true">
            <path d="M0 12C0 3 6 0 13 0s14 3 15 11l-3 4H3z" fill="#9fc3df" />
            <path d="M2 8c2-6 7-7 10-5l-3 7z" fill="#9a8ed8" />
            <path d="M10 8c3-6 9-5 13-2l2 5z" fill="#6fbfb0" />
            <path d="m11 9 4-4 5 5z" fill="#e7cf8d" />
            <path d="M2 13 6 10l4 1 4-2 5 3 7 0-3 4H4z" fill="#14296f" />
          </svg>
        </label>
        <button type="button" aria-label="Task view" className="mr-3 ml-2">
          <Glyph className="size-3.5"><path d="M5 2h11v11H5z" fill="#d2d2d2" /><path d="M0 4h5v6h7v5H0z" fill="#2a2a2a" /></Glyph>
        </button>
        <div className="flex h-full w-[289px] items-center justify-between">
          {apps.map(({ label, mark, selected, icon }) => (
            <button key={label} type="button" aria-label={label} className={`relative flex h-6 w-6 items-center justify-center rounded-[3px] ${selected ? "bg-[#fbfbfb]" : ""}`}>
              {icon}
              {mark && <span className="absolute inset-x-0 -bottom-px flex justify-center"><span className={`h-0.5 rounded-full ${mark}`} /></span>}
            </button>
          ))}
        </div>
      </div>
      <div className="flex flex-1 items-center justify-end pr-3">
        <button type="button" aria-label="Show hidden icons"><ChevronUp size={10} strokeWidth={2.4} /></button>
        <Mic size={11} strokeWidth={2} className="ml-[11px] text-[#3a73b5]" />
        <Glyph className="ml-2.5 size-[13px]"><path d="M10 2H1v9h13V8M4 14h7M6 11v3M9 11v3M11 1v3c0 3 4 3 4 0V1zM13 6v3" {...line} /></Glyph>
        <Glyph className="ml-[3px] size-[11px]"><path d="M1 6h3l4-4v12l-4-4H1zM10.500 6l4 4m0-4-4 4" {...line} /></Glyph>
        <div className="ml-[11px] text-right">
          <p>12:36 AM</p>
          <p>4/22/2026</p>
        </div>
      </div>
    </footer>
  );
}

export default function App() {
  return (
    <div className="flex h-screen flex-col overflow-hidden bg-[#242424] font-['Noto_Sans','Open_Sans',sans-serif] select-none">
      <header className="shrink-0">
        <MainBar />
        <PatternBar />
      </header>
      <PlaylistTitle />
      <ScrollRow />
      <Ruler />
      <Arrangement />
      <Taskbar />
    </div>
  );
}
